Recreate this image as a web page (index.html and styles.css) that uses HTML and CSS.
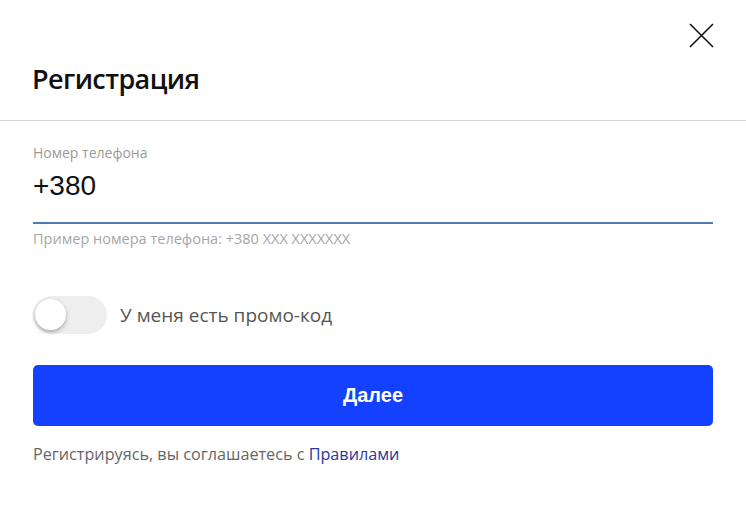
FILE: index.html
```html
<!DOCTYPE html>
<html lang="ru">
<head>
    <meta charset="UTF-8">
    <meta name="viewport" content="width=device-width, initial-scale=1.0">
    <title>Регистрация</title>
    <link rel="stylesheet" href="styles.css">
</head>
<body>
    <div class="modal">
        <div class="modal-header">
            <div class="modal-close-row">
                <button class="modal-close" aria-label="Закрыть">
                    <svg width="25" height="25" viewBox="0 0 25 25">
                        <path d="M1 1 L24 24 M24 1 L1 24" stroke="#111" stroke-width="1.6" fill="none"/>
                    </svg>
                </button>
            </div>
            <h1 class="modal-title">Регистрация</h1>
        </div>

        <div class="modal-body">
            <div class="phone-field">
                <label class="phone-label" for="phone">Номер телефона</label>
                <input class="phone-input" id="phone" type="tel" value="+380">
                <div class="phone-hint">Пример номера телефона: +380 XXX XXXXXXX</div>
            </div>

            <label class="promo">
                <span class="promo-switch"><span class="promo-knob"></span></span>
                <span class="promo-text">У меня есть промо-код</span>
            </label>

            <button class="btn-next">Далее</button>

            <p class="terms">Регистрируясь, вы соглашаетесь с <a href="#">Правилами</a></p>
        </div>
    </div>
</body>
</html>
```

FILE: styles.css
```css
html, body {
    margin: 0;
    padding: 0;
    background: #fff;
}
body {
    font-family: "Open Sans", "Noto Sans", sans-serif;
    color: #111;
}
.modal {
    width: 746px;
}
.modal-header {
    border-bottom: 1px solid #d6d6d6;
    padding: 23px 33px 0;
    height: 97px;
}
.modal-close-row {
    display: flex;
    justify-content: flex-end;
}
.modal-close {
    border: 0;
    background: none;
    padding: 0;
    margin-right: -1px;
    width: 25px;
    height: 25px;
    cursor: pointer;
    line-height: 0;
}
.modal-title {
    margin: 15px 0 0 -1px;
    font-size: 27px;
    font-weight: 600;
    line-height: 32px;
    letter-spacing: -0.6px;
    color: #111;
}
.modal-body {
    padding: 0 33px;
}
.phone-field {
    padding-top: 22px;
}
.phone-label {
    display: block;
    font-size: 14px;
    line-height: 20px;
    color: #9a9a9a;
}
.phone-input {
    display: block;
    box-sizing: border-box;
    width: 100%;
    border: 0;
    border-bottom: 2px solid #4f7bb3;
    outline: none;
    padding: 6px 0 19px;
    margin: 0;
    font-family: "Liberation Sans", Arial, sans-serif;
    font-size: 28px;
    line-height: 34px;
    color: #111;
}
.phone-hint {
    margin-top: 5px;
    font-size: 14.5px;
    line-height: 20px;
    color: #a6a6a6;
}
.promo {
    display: flex;
    align-items: center;
    gap: 13px;
    margin-top: 47px;
    cursor: pointer;
}
.promo-switch {
    position: relative;
    display: block;
    width: 74px;
    height: 38px;
    border-radius: 19px;
    background: #eeeeee;
}
.promo-knob {
    position: absolute;
    left: 2px;
    top: 3px;
    width: 31px;
    height: 31px;
    border-radius: 50%;
    background: #fff;
    box-shadow: 0 2px 4px rgba(0, 0, 0, 0.3);
}
.promo-text {
    font-size: 19px;
    color: #555;
}
.btn-next {
    display: block;
    width: 100%;
    height: 61px;
    margin-top: 31px;
    border: 0;
    border-radius: 5px;
    background: #1441ff;
    color: #fff;
    font-family: "Liberation Sans", Arial, sans-serif;
    font-size: 20px;
    font-weight: bold;
    cursor: pointer;
}
.terms {
    margin: 17px 0 0;
    font-size: 16.2px;
    line-height: 22px;
    color: #666;
}
.terms a {
    color: #26379b;
    text-decoration: none;
}
```
